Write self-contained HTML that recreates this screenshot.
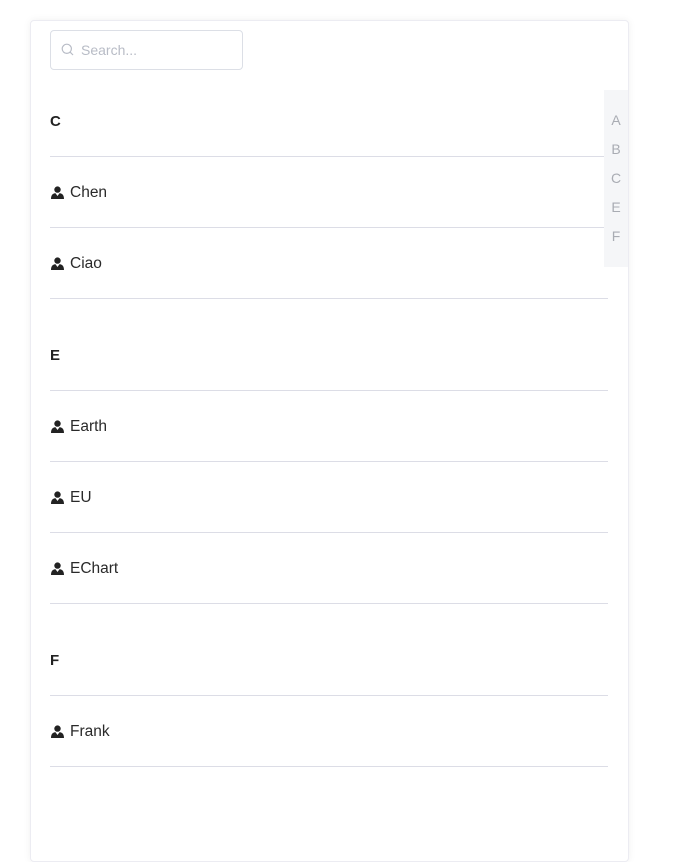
<!DOCTYPE html>
<html><head><meta charset="utf-8"><style>
html,body{margin:0;padding:0;background:#fff;width:675px;height:845px;overflow:hidden;font-family:"Liberation Sans",sans-serif;}
.card{position:absolute;left:30px;top:20px;width:597px;height:840px;border:1px solid #ececf2;border-radius:4px;box-shadow:0 0 8px rgba(0,0,0,0.06);background:#fff;}
.search{position:absolute;left:50px;top:30px;width:191px;height:38px;border:1px solid #dcdfe6;border-radius:4px;}
.search span{position:absolute;left:30px;top:11px;font-size:14px;color:#b8bcc6;}
.search svg{position:absolute;left:10px;top:12px;}
.h{position:absolute;left:50px;font-size:15px;font-weight:bold;color:#222;}
.line{position:absolute;left:50px;width:558px;height:1px;background:#dcdde6;}
.it{position:absolute;left:51px;font-size:15.5px;color:#2a2a2a;}
.it svg{position:absolute;left:0;top:2px;}
.it span{position:absolute;left:19px;top:0;white-space:nowrap;}
.idx{position:absolute;left:604px;top:90px;width:24px;height:177px;background:#f5f6f8;}
.idx div{position:absolute;left:0;width:24px;text-align:center;font-size:14px;color:#a9acb3;}
</style></head><body>
<div class="card"></div>
<div class="search"><svg width="13" height="13" viewBox="0 0 13 13"><circle cx="5.8" cy="5.8" r="4.6" fill="none" stroke="#b8bcc6" stroke-width="1.2"/><line x1="9.2" y1="9.2" x2="12" y2="12" stroke="#b8bcc6" stroke-width="1.2"/></svg><span>Search...</span></div>

<div class="h" style="top:113px">C</div>
<div class="line" style="top:156px"></div>
<div class="it" style="top:184px"><svg width="13" height="13" viewBox="0 0 13 13"><circle cx="6.5" cy="3.6" r="3.2" fill="#222"/><path d="M0 13 C0 8.5 2.5 7.3 4.5 7.3 L6.5 10 L8.5 7.3 C10.5 7.3 13 8.5 13 13 Z" fill="#222"/></svg><span>Chen</span></div>
<div class="line" style="top:227px"></div>
<div class="it" style="top:255px"><svg width="13" height="13" viewBox="0 0 13 13"><circle cx="6.5" cy="3.6" r="3.2" fill="#222"/><path d="M0 13 C0 8.5 2.5 7.3 4.5 7.3 L6.5 10 L8.5 7.3 C10.5 7.3 13 8.5 13 13 Z" fill="#222"/></svg><span>Ciao</span></div>
<div class="line" style="top:298px"></div>

<div class="h" style="top:347px">E</div>
<div class="line" style="top:390px"></div>
<div class="it" style="top:418px"><svg width="13" height="13" viewBox="0 0 13 13"><circle cx="6.5" cy="3.6" r="3.2" fill="#222"/><path d="M0 13 C0 8.5 2.5 7.3 4.5 7.3 L6.5 10 L8.5 7.3 C10.5 7.3 13 8.5 13 13 Z" fill="#222"/></svg><span>Earth</span></div>
<div class="line" style="top:461px"></div>
<div class="it" style="top:489px"><svg width="13" height="13" viewBox="0 0 13 13"><circle cx="6.5" cy="3.6" r="3.2" fill="#222"/><path d="M0 13 C0 8.5 2.5 7.3 4.5 7.3 L6.5 10 L8.5 7.3 C10.5 7.3 13 8.5 13 13 Z" fill="#222"/></svg><span>EU</span></div>
<div class="line" style="top:532px"></div>
<div class="it" style="top:560px"><svg width="13" height="13" viewBox="0 0 13 13"><circle cx="6.5" cy="3.6" r="3.2" fill="#222"/><path d="M0 13 C0 8.5 2.5 7.3 4.5 7.3 L6.5 10 L8.5 7.3 C10.5 7.3 13 8.5 13 13 Z" fill="#222"/></svg><span>EChart</span></div>
<div class="line" style="top:603px"></div>

<div class="h" style="top:652px">F</div>
<div class="line" style="top:695px"></div>
<div class="it" style="top:723px"><svg width="13" height="13" viewBox="0 0 13 13"><circle cx="6.5" cy="3.6" r="3.2" fill="#222"/><path d="M0 13 C0 8.5 2.5 7.3 4.5 7.3 L6.5 10 L8.5 7.3 C10.5 7.3 13 8.5 13 13 Z" fill="#222"/></svg><span>Frank</span></div>
<div class="line" style="top:766px"></div>

<div class="idx">
<div style="top:22px">A</div>
<div style="top:51px">B</div>
<div style="top:80px">C</div>
<div style="top:109px">E</div>
<div style="top:138px">F</div>
</div>
</body></html>
